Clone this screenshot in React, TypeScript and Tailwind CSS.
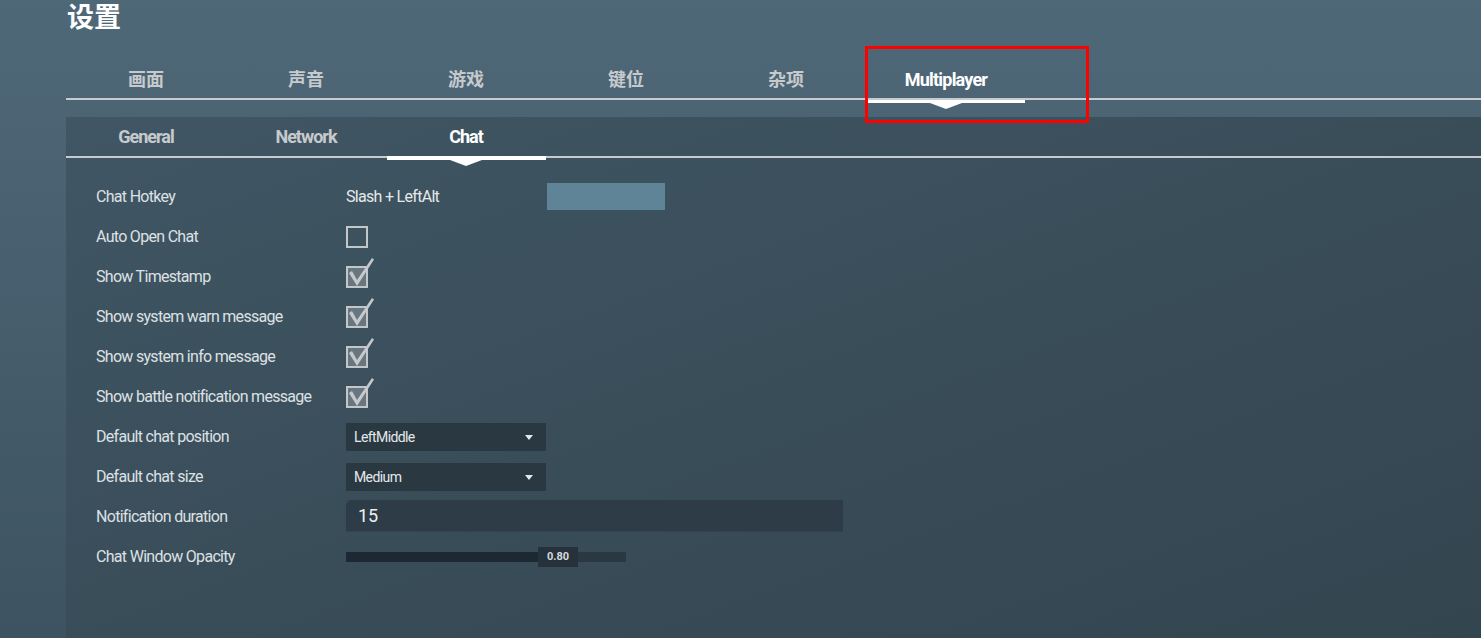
import React from "react"

const mainTabs = ["画面", "声音", "游戏", "键位", "杂项", "Multiplayer"]
const subTabs = ["General", "Network", "Chat"]

const font = { fontFamily: 'Roboto, "Noto Sans CJK SC", sans-serif' }

function Check({ checked }: { checked: boolean }) {
  return (
    <div className="relative h-[22px] w-[22px]">
      <div
        className={
          "h-[22px] w-[22px] border-2 border-[#c3c7ca] " + (checked ? "bg-[#67767f]" : "bg-transparent")
        }
      />
      {checked && (
        <svg className="absolute -top-[9px] left-[1px] overflow-visible" width="28" height="30" viewBox="0 0 28 30">
          <path d="M2 16 L5 14 L10 23 L25 1 L27 2.5 L10 29 Z" fill="#c5c9cc" />
        </svg>
      )}
    </div>
  )
}

function Select({ value }: { value: string }) {
  return (
    <div className="flex h-[28px] w-[200px] items-center justify-between bg-[#293841] pl-[8px] pr-[13px] text-[14px] tracking-[-0.6px] text-[#e6e9eb]">
      <span>{value}</span>
      <span className="h-0 w-0 border-x-[4px] border-t-[5px] border-x-transparent border-t-[#e6e9eb]" />
    </div>
  )
}

function Row({ label, children }: { label: string; children: React.ReactNode }) {
  return (
    <div className="flex h-[40px] items-center">
      <div className="w-[280px] pl-[30px] text-[16px] tracking-[-0.7px] text-[#dde1e4]">{label}</div>
      <div className="flex items-center">{children}</div>
    </div>
  )
}

export default function App() {
  return (
    <div
      style={font}
      className="relative flex h-[638px] w-full flex-col overflow-hidden bg-gradient-to-b from-[#4f6878] to-[#3d5361] pl-[66px]"
    >
      {/* Title */}
      <div className="h-[46px] pl-[1px] pt-[1px] text-[27px] font-bold leading-[34px] text-white">设置</div>

      {/* Main tabs */}
      <div className="flex h-[54px] border-b-2 border-[#c8cbcd]">
        {mainTabs.map((t, i) => {
          const active = i === mainTabs.length - 1
          return (
            <div
              key={t}
              className={
                "relative flex w-[160px] items-center justify-center pt-[14px] text-[18px] font-bold " +
                (active ? "tracking-[-0.8px] text-white" : "text-[#c6cacd]")
              }
            >
              {t}
              {active && (
                <>
                  <div className="absolute -bottom-[5px] left-[1px] h-[3px] w-[158px] bg-white" />
                  <div className="absolute -bottom-[11px] left-[64px] h-0 w-0 border-x-[16px] border-t-[6px] border-x-transparent border-t-white" />
                </>
              )}
            </div>
          )
        })}
      </div>

      <div className="h-[17px]" />

      {/* Sub panel */}
      <div className="flex-1 bg-gradient-to-br from-[#405664] to-[#33454f]">
        <div className="flex h-[41px] border-b-2 border-[#c8cbcd]">
          {subTabs.map((t, i) => {
            const active = i === 2
            return (
              <div
                key={t}
                className={
                  "relative flex w-[160px] items-center justify-center text-[18px] font-bold tracking-[-1px] " +
                  (active ? "text-white" : "text-[#c6cacd]")
                }
              >
                {t}
                {active && (
                  <>
                    <div className="absolute -bottom-[4px] left-[1px] h-[4px] w-[159px] bg-white" />
                    <div className="absolute -bottom-[10px] left-[64px] h-0 w-0 border-x-[16px] border-t-[6px] border-x-transparent border-t-white" />
                  </>
                )}
              </div>
            )
          })}
        </div>

        <div className="pt-[19px]">
          <Row label="Chat Hotkey">
            <span className="w-[201px] text-[16px] tracking-[-0.7px] text-[#e6e9eb]">Slash + LeftAlt</span>
            <div className="-mt-[1px] h-[27px] w-[118px] bg-[#5f8497]" />
          </Row>
          <Row label="Auto Open Chat">
            <Check checked={false} />
          </Row>
          <Row label="Show Timestamp">
            <Check checked />
          </Row>
          <Row label="Show system warn message">
            <Check checked />
          </Row>
          <Row label="Show system info message">
            <Check checked />
          </Row>
          <Row label="Show battle notification message">
            <Check checked />
          </Row>
          <Row label="Default chat position">
            <Select value="LeftMiddle" />
          </Row>
          <Row label="Default chat size">
            <Select value="Medium" />
          </Row>
          <Row label="Notification duration">
            <div className="-mt-[3px] flex h-[32px] w-[497px] items-center bg-[#2d3c46] pl-[12px] text-[18px] text-[#eef0f2] [clip-path:polygon(4px_0,100%_0,100%_100%,0_100%,0_4px)]">
              15
            </div>
          </Row>
          <Row label="Chat Window Opacity">
            <div className="relative flex h-[10px] w-[280px]">
              <div className="h-full w-[192px] bg-[#1d2932]" />
              <div className="h-full flex-1 bg-[#2a3841]" />
              <div className="absolute -top-[5px] left-[192px] flex h-[20px] w-[40px] items-center justify-center bg-[#25323b] text-[11px] font-bold text-[#d5d9dc]">
                0.80
              </div>
            </div>
          </Row>
        </div>
      </div>

      {/* annotation box */}
      <div className="absolute left-[865px] top-[46px] h-[77px] w-[224px] border-[3px] border-[#ff0000]" />
    </div>
  )
}
